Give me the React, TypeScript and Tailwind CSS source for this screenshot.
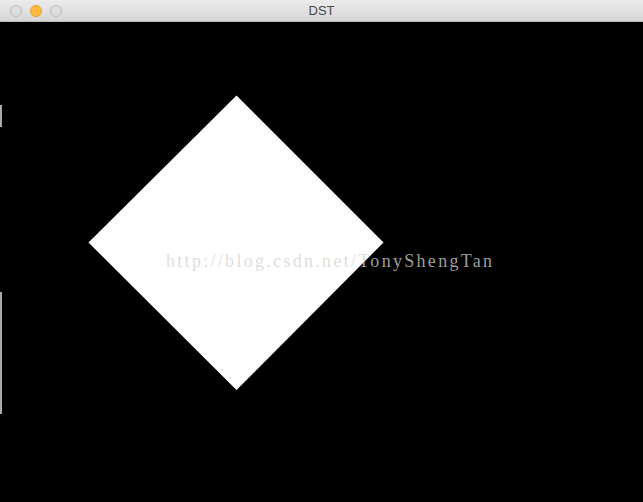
export default function App() {
  return (
    <div className="w-[643px] h-[502px] flex flex-col bg-black overflow-hidden">
      <div className="relative h-[22px] shrink-0 flex items-center bg-gradient-to-b from-[#ececec] to-[#d6d6d6] border-b border-[#b9b9b9]">
        <div className="flex items-center gap-[8px] pl-[10px]">
          <span className="w-[12px] h-[12px] rounded-full bg-[#dedede] border border-[#bdbdbd]" />
          <span className="w-[12px] h-[12px] rounded-full bg-[#fdbc40] border border-[#e0a12d]" />
          <span className="w-[12px] h-[12px] rounded-full bg-[#dedede] border border-[#bdbdbd]" />
        </div>
        <div className="absolute inset-0 flex items-center justify-center text-[13px] text-[#4a4a4a] font-['Liberation_Sans',sans-serif]">
          DST
        </div>
      </div>
      <div className="relative flex-1">
        <svg width="643" height="480" viewBox="0 22 643 480" className="block">
          <polygon points="236.5,95.5 383.5,242.5 236.5,390 88.5,242.5" fill="#ffffff" />
          <rect x="0" y="105" width="2" height="22" fill="#a9a9a9" />
          <rect x="0" y="292" width="2" height="122" fill="#a9a9a9" />
        </svg>
        <div className="absolute left-[166px] top-[229px] text-[18px] leading-[20px] tracking-[2.3px] text-[rgba(211,211,205,0.76)] font-['Liberation_Serif',serif] whitespace-nowrap">
          http://blog.csdn.net/TonyShengTan
        </div>
      </div>
    </div>
  );
}
